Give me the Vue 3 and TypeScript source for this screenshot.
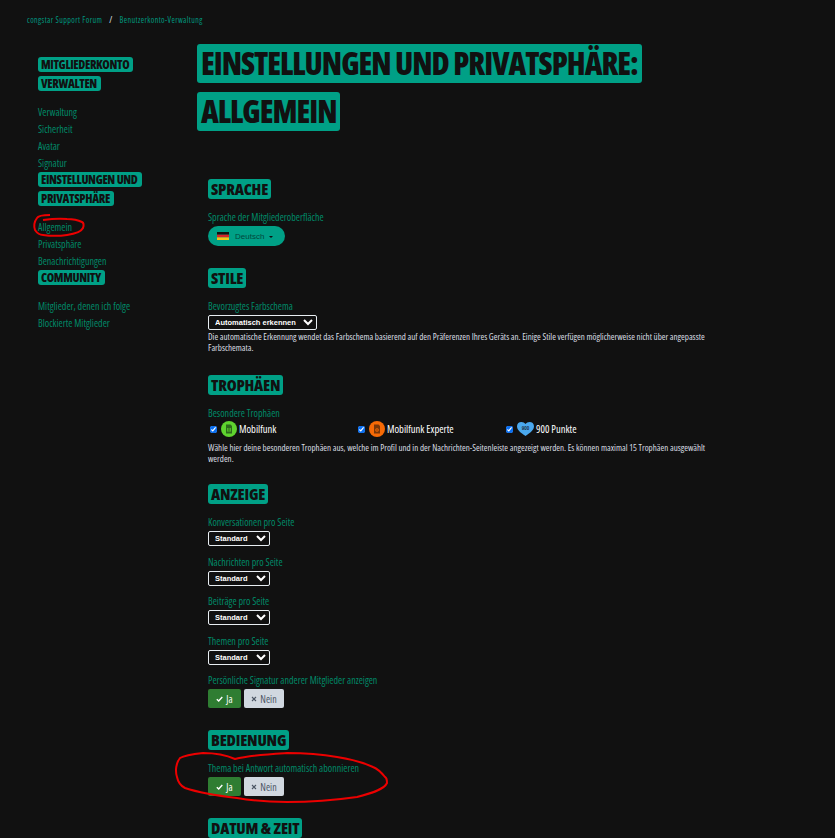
<script setup lang="ts">
interface NavGroup {
  lines: string[]
  links: string[]
}

const nav: NavGroup[] = [
  { lines: ['Mitgliederkonto', 'verwalten'], links: ['Verwaltung', 'Sicherheit', 'Avatar', 'Signatur'] },
  { lines: ['Einstellungen und', 'Privatsphäre'], links: ['Allgemein', 'Privatsphäre', 'Benachrichtigungen'] },
  { lines: ['Community'], links: ['Mitglieder, denen ich folge', 'Blockierte Mitglieder'] }
]

const perPage = ['Konversationen pro Seite', 'Nachrichten pro Seite', 'Beiträge pro Seite', 'Themen pro Seite']
</script>

<template>
  <div class="page">
    <div class="crumbs">
      <a>congstar Support Forum</a>
      <span class="slash">/</span>
      <a>Benutzerkonto-Verwaltung</a>
    </div>

    <div class="layout">
      <aside class="side">
        <div v-for="g in nav" :key="g.lines[0]" class="group">
          <h3 class="side-title">
            <span v-for="line in g.lines" :key="line">{{ line }}</span>
          </h3>
          <ul>
            <li v-for="l in g.links" :key="l">{{ l }}</li>
          </ul>
        </div>
      </aside>

      <main class="main">
        <h1 class="title">
          <span>Einstellungen und Privatsphäre:</span>
          <span>Allgemein</span>
        </h1>

        <section class="sec">
          <h2 class="sec-title">Sprache</h2>
          <label class="lbl">Sprache der Mitgliederoberfläche</label>
          <button class="lang">
            <svg width="12" height="8" viewBox="0 0 12 8">
              <rect width="12" height="2.7" fill="#111" />
              <rect y="2.7" width="12" height="2.7" fill="#d8242a" />
              <rect y="5.4" width="12" height="2.6" fill="#f5c518" />
            </svg>
            <span>Deutsch</span>
            <i class="caret"></i>
          </button>
        </section>

        <section class="sec">
          <h2 class="sec-title">Stile</h2>
          <label class="lbl">Bevorzugtes Farbschema</label>
          <select class="sel wide"><option>Automatisch erkennen</option></select>
          <p class="help">Die automatische Erkennung wendet das Farbschema basierend auf den Präferenzen Ihres Geräts an. Einige Stile verfügen möglicherweise nicht über angepasste Farbschemata.</p>
        </section>

        <section class="sec">
          <h2 class="sec-title">Trophäen</h2>
          <label class="lbl">Besondere Trophäen</label>
          <div class="trophies">
            <div class="trophy">
              <input type="checkbox" checked />
              <svg width="16" height="16" viewBox="0 0 16 16">
                <circle cx="8" cy="8" r="8" fill="#5fd32f" />
                <path d="M5 3.500h4.500L11 5v7.500H5z" fill="#2c6a1c" />
                <rect x="6.300" y="7" width="3.400" height="3.600" fill="#5fd32f" />
                <rect x="7.400" y="7" width="1.200" height="3.600" fill="#2c6a1c" />
              </svg>
              <span>Mobilfunk</span>
            </div>
            <div class="trophy">
              <input type="checkbox" checked />
              <svg width="16" height="16" viewBox="0 0 16 16">
                <circle cx="8" cy="8" r="8" fill="#f66a06" />
                <path d="M5 3.500h4.500L11 5v7.500H5z" fill="#7a3708" />
                <circle cx="8" cy="9" r="1.800" fill="#f66a06" />
                <circle cx="8" cy="9" r=".8" fill="#7a3708" />
              </svg>
              <span>Mobilfunk Experte</span>
            </div>
            <div class="trophy">
              <input type="checkbox" checked />
              <svg width="17" height="16" viewBox="0 0 17 16">
                <path d="M8.500 15C3.500 11.500 0 9 0 5.200 0 2.600 2 1 4.400 1 6.100 1 7.600 1.800 8.500 3c.9-1.200 2.400-2 4.100-2C15 1 17 2.600 17 5.200 17 9 13.500 11.500 8.500 15z" fill="#4aa8ee" />
                <text x="8.500" y="8.500" text-anchor="middle" class="heart-num">900</text>
              </svg>
              <span>900 Punkte</span>
            </div>
          </div>
          <p class="help tight">Wähle hier deine besonderen Trophäen aus, welche im Profil und in der Nachrichten-Seitenleiste angezeigt werden. Es können maximal 15 Trophäen ausgewählt werden.</p>
        </section>

        <section class="sec">
          <h2 class="sec-title">Anzeige</h2>
          <div v-for="p in perPage" :key="p" class="field">
            <label class="lbl">{{ p }}</label>
            <select class="sel"><option>Standard</option></select>
          </div>
          <label class="lbl">Persönliche Signatur anderer Mitglieder anzeigen</label>
          <div class="yesno">
            <button class="yes"><svg width="7" height="6" viewBox="0 0 7 6"><path d="M.8 3.200 2.700 5 6.300 1" fill="none" stroke="#fff" stroke-width="1.400" /></svg>Ja</button>
            <button class="no"><svg width="6" height="6" viewBox="0 0 6 6"><path d="M1 1l4 4M5 1 1 5" fill="none" stroke="#4b5563" stroke-width="1.100" /></svg>Nein</button>
          </div>
        </section>

        <section class="sec">
          <h2 class="sec-title">Bedienung</h2>
          <label class="lbl">Thema bei Antwort automatisch abonnieren</label>
          <div class="yesno">
            <button class="yes"><svg width="7" height="6" viewBox="0 0 7 6"><path d="M.8 3.200 2.700 5 6.300 1" fill="none" stroke="#fff" stroke-width="1.400" /></svg>Ja</button>
            <button class="no"><svg width="6" height="6" viewBox="0 0 6 6"><path d="M1 1l4 4M5 1 1 5" fill="none" stroke="#4b5563" stroke-width="1.100" /></svg>Nein</button>
          </div>
        </section>

        <section class="sec">
          <h2 class="sec-title">Datum &amp; Zeit</h2>
        </section>
      </main>
    </div>

    <!-- rote Markierungen aus dem Screenshot -->
    <svg class="marks" width="835" height="838" viewBox="0 0 835 838">
      <path d="M50 215C44 215 38 216 37 218 34 222 34 227 35 230 37 233 40 235 43 235 50 236 60 236 67 235 74 234 81 232 83 228 84 225 84 223 82 222 78 220 72 219 67 219 58 218 50 219 43 220" fill="none" stroke="#ec0000" stroke-width="2" />
      <path d="M235 759C226 755 214 753 203 753 194 754 185 755 180 758 176 763 175 771 177 777 178 782 181 786 185 788 200 793 220 796 237 798 254 801 270 802 287 802 310 802 336 800 357 797 369 794 384 790 387 783 387 780 387 778 385 777 381 772 378 769 373 767 362 762 350 759 337 757 320 754 304 753 287 753 270 754 250 755 235 759" fill="none" stroke="#ec0000" stroke-width="2" />
    </svg>
  </div>
</template>

<style scoped>
.page {
  position: relative;
  height: 838px;
  overflow: hidden;
  background: #111;
  font-family: "Open Sans", "Liberation Sans", sans-serif;
  font-stretch: 75%;
  color: #008a68;
}

.crumbs {
  display: flex;
  gap: 7px;
  padding: 15px 0 0 27px;
  height: 28px;
  box-sizing: border-box;
  font-size: 8px;
  line-height: 10px;
  letter-spacing: .4px;
  color: #009a80;
}

.slash {
  color: #fff;
}

.layout {
  display: flex;
  padding-left: 38px;
}

.side {
  width: 159px;
  flex: none;
  padding-top: 29px;
}

.side-title {
  margin: 0;
  font-size: 12px;
  font-weight: 800;
  letter-spacing: -.35px;
  text-transform: uppercase;
  color: #111;
}

.side-title span {
  display: block;
  width: fit-content;
  height: 15px;
  line-height: 15px;
  padding: 0 4px 0 3px;
  background: #00a086;
  border-radius: 3px;
}

.side-title span + span {
  margin-top: 4px;
}

.side ul {
  list-style: none;
  margin: 0;
  padding: 13px 0 0;
}

.side li {
  height: 17px;
  line-height: 17px;
  font-size: 10px;
}

.main {
  flex: 1;
  padding-top: 16px;
}

.title {
  margin: 0 0 48px;
  font-size: 31px;
  font-weight: 800;
  letter-spacing: -1px;
  text-transform: uppercase;
  color: #111;
}

.title span {
  display: block;
  width: fit-content;
  height: 39px;
  line-height: 39px;
  padding: 0 4px;
  background: #00a086;
  border-radius: 3px;
}

.title span + span {
  margin-top: 9px;
}

.sec {
  padding-left: 11px;
  margin-bottom: 22px;
}

.sec-title {
  width: fit-content;
  height: 20px;
  margin: 0 0 10px;
  padding: 0 3px;
  font-size: 16px;
  line-height: 20px;
  font-weight: 800;
  letter-spacing: -.2px;
  text-transform: uppercase;
  color: #111;
  background: #00a086;
  border-radius: 3px;
}

.lbl {
  display: block;
  font-size: 10px;
  line-height: 17px;
}

.lang {
  display: flex;
  align-items: center;
  width: 77px;
  height: 20px;
  padding: 0 0 0 9px;
  border: 0;
  border-radius: 10px;
  background: #00a086;
  color: #03463c;
  font: 8px "Liberation Sans", sans-serif;
}

.lang span {
  margin-left: 6px;
}

.caret {
  margin: 2px 0 0 5px;
  border: 2px solid transparent;
  border-top: 2px solid #111;
  border-bottom: 0;
}

.sel {
  display: block;
  height: 15px;
  width: 62px;
  padding: 0 0 0 2px;
  background: #111;
  color: #fff;
  border: 1px solid #e8eef2;
  border-radius: 2px;
  font: 700 7.500px "Liberation Sans", sans-serif;
  color-scheme: dark;
}

.sel.wide {
  width: 109px;
}

.field {
  margin-bottom: 7.500px;
}

.help {
  margin: 1px 0 0;
  width: 510px;
  font-size: 9px;
  line-height: 11px;
  color: #d9dee3;
}

.help.tight {
  margin: 0 0 -2px;
}

.trophies {
  display: grid;
  grid-template-columns: 148px 148px 1fr;
  height: 16px;
  margin: -1px 0 5px;
}

.trophy {
  display: flex;
  align-items: center;
  gap: 2px;
  font-size: 10.500px;
  color: #fff;
}

.trophy input {
  width: 7px;
  height: 7px;
  margin: 0 2px 0 2px;
  accent-color: #0b6ff0;
}

.heart-num {
  font: 700 4.500px "Liberation Sans", sans-serif;
  fill: #1b2a38;
}

.yesno {
  display: flex;
  gap: 3px;
}

.yes,
.no {
  display: flex;
  align-items: center;
  justify-content: center;
  gap: 3px;
  height: 19px;
  padding: 0;
  border: 0;
  border-radius: 2px;
  font-family: "Open Sans", "Liberation Sans", sans-serif;
  font-stretch: 75%;
  font-size: 10px;
}

.yes {
  width: 33px;
  background: #2f7d32;
  color: #fff;
}

.no {
  width: 40px;
  background: #d1d8e0;
  color: #4b5563;
}

.marks {
  position: absolute;
  left: 0;
  top: 0;
  pointer-events: none;
}
</style>

<style>
html, body {
  background: #111;
}
</style>
